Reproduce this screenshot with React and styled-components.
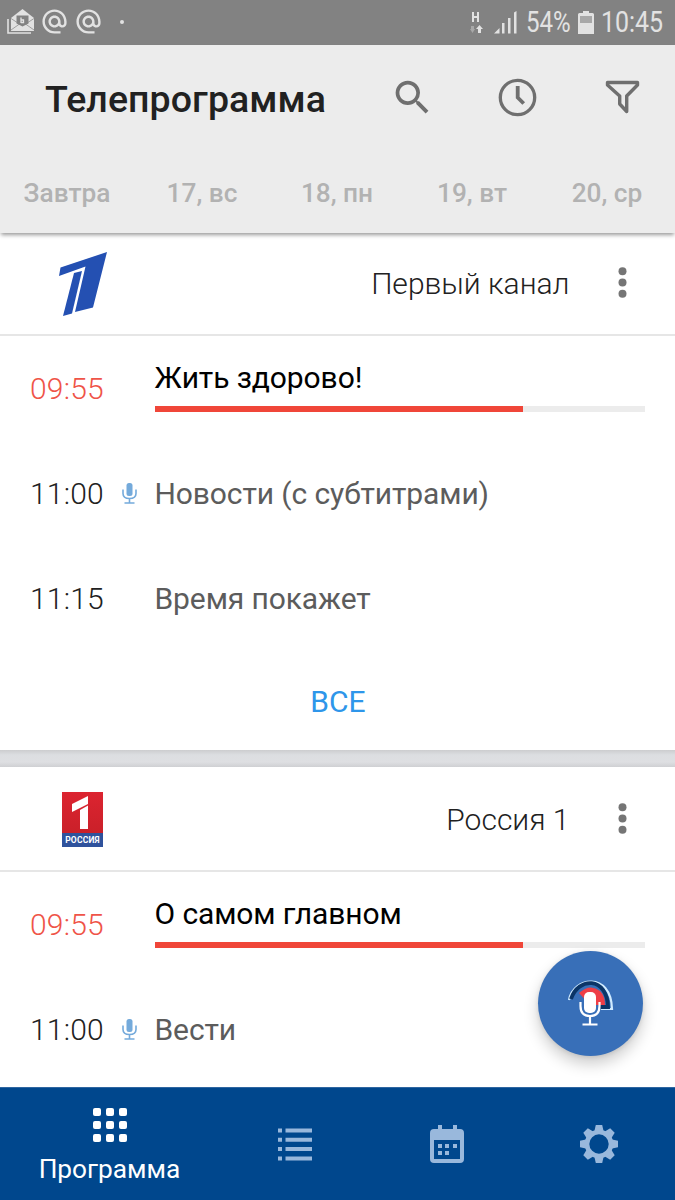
import React from "react"
import styled, { createGlobalStyle } from "styled-components"
import { MdAlternateEmail, MdSearch } from "react-icons/md"

const GlobalStyle = createGlobalStyle`
  * {
    box-sizing: border-box;
  }
  body {
    margin: 0;
    background: #fff;
    font-family: Roboto, "Noto Sans", sans-serif;
  }
`

const Screen = styled.div`
  position: relative;
  display: flex;
  flex-direction: column;
  width: 675px;
  height: 1200px;
  overflow: hidden;
  background: #fff;
`

const StatusBar = styled.div`
  display: flex;
  flex: none;
  align-items: center;
  justify-content: space-between;
  height: 45px;
  padding: 0 11px 0 7px;
  background: #828282;
  color: #e2e2e2;
`
const StatusGroup = styled.div`
  display: flex;
  align-items: center;
  height: 45px;
`
const MailIcon = styled.svg`
  margin: 0 5px 2px 0;
`
const AtIcon = styled(MdAlternateEmail)`
  width: 29px;
  height: 29px;
  margin: 0 5px 2px 0;
`
const Dot = styled.span`
  width: 4px;
  height: 4px;
  margin: 0 0 1px 12px;
  border-radius: 50%;
  background: #e2e2e2;
`
const StatusText = styled.span`
  width: ${(props) => props.$width}px;
  font-size: 29px;
  line-height: 45px;
  white-space: nowrap;

  span {
    display: inline-block;
    transform: scaleX(${(props) => props.$scale});
    transform-origin: left center;
  }
`
const Battery = styled.svg`
  margin: 0 7px 1px 8px;
`

const AppBar = styled.header`
  position: relative;
  z-index: 1;
  flex: none;
  height: 188px;
  background: #ececec;
  box-shadow: 0 3px 4px -1px rgba(0, 0, 0, 0.4);
`
const TitleRow = styled.div`
  display: flex;
  align-items: center;
  height: 105px;
  padding: 0 30px 0 45px;
  color: #6f6f6f;
`
const Title = styled.h1`
  flex: 1;
  margin: 3px 0 0;
  color: #212121;
  font-size: 37.5px;
  font-weight: 500;
  letter-spacing: 0.08px;
  line-height: 44px;
  white-space: nowrap;
`
const IconButton = styled.button`
  display: flex;
  align-items: center;
  justify-content: center;
  width: 45px;
  height: 45px;
  margin-left: ${(props) => props.$gap || 0}px;
  padding: 0;
  border: none;
  background: none;
  color: inherit;
`
const Days = styled.nav`
  display: flex;
  height: 83px;
`
const Day = styled.a`
  flex: 1;
  padding-right: 1px;
  color: #b2b2b2;
  font-size: 26.25px;
  font-weight: 500;
  line-height: 87px;
  text-align: center;
  white-space: nowrap;
`

const Channels = styled.main`
  flex: 1;
  min-height: 0;
  margin-top: -2px;
  overflow: hidden;
`
const Card = styled.section`
  background: #fff;
`
const Divider = styled.div`
  height: 17px;
  background: linear-gradient(#cccdcf, #dcdee1 5px, #dedfe2 12px, #cfd0d3);
`
const ChannelHeader = styled.div`
  display: flex;
  align-items: center;
  height: 105px;
  padding-right: 30px;
  border-bottom: 2px solid #e6e6e6;
`
const LogoBox = styled.div`
  display: flex;
  align-items: center;
  justify-content: center;
  width: 165px;
  padding-top: 2px;
`
const ChannelName = styled.h2`
  flex: 1;
  margin: 2px 30.5px 0 0;
  color: #212121;
  font-size: 30px;
  font-weight: 300;
  text-align: right;
`
const RussiaLogo = styled.div`
  display: flex;
  flex-direction: column;
  align-items: center;
  width: 41px;
  height: 55px;
  background: linear-gradient(#dc2430, #c41f27);
`
const RussiaName = styled.span`
  width: 41px;
  height: 14px;
  background: #2f529c;
  color: #fff;
  font-size: 8.5px;
  font-weight: 700;
  letter-spacing: 0.2px;
  line-height: 14px;
  text-align: center;
`
const Show = styled.div`
  display: flex;
  align-items: center;
  height: 105px;
  padding: 0 30px;
`
const Time = styled.span`
  width: 88px;
  color: ${(props) => (props.$live ? "#ef5448" : "#212121")};
  font-size: 30px;
  font-weight: 300;
  letter-spacing: 0.2px;
`
const MicSlot = styled.span`
  display: flex;
  width: 36.5px;
  padding-left: 4px;
`
const ShowBody = styled.div`
  flex: 1;
`
const ShowName = styled.div`
  color: ${(props) => (props.$live ? "#000" : "#5c5c5c")};
  font-size: 30px;
  letter-spacing: -0.1px;
  line-height: 36px;
`
const Progress = styled.div`
  height: 6px;
  margin: 10px 0 6px;
  background: #ececec;
`
const ProgressFill = styled.div`
  height: 6px;
  background: #f04639;
`
const AllButton = styled.button`
  display: block;
  width: 100%;
  height: 99px;
  padding: 1px 0 0 1px;
  border: none;
  background: none;
  color: #2e96ea;
  font: 400 30px Roboto, "Noto Sans", sans-serif;
`

const Fab = styled.button`
  position: absolute;
  top: 951px;
  left: 538px;
  width: 105px;
  height: 105px;
  padding: 0;
  border: none;
  border-radius: 50%;
  background: #386fb8;
  box-shadow: 0 8px 15px rgba(0, 0, 0, 0.2), 0 1px 4px rgba(0, 0, 0, 0.1);
`

const BottomNav = styled.nav`
  display: flex;
  flex: none;
  height: 113px;
  border-top: 1px solid #2f66a0;
  background: #00478d;
`
const NavItem = styled.a`
  display: flex;
  flex-direction: column;
  align-items: center;
  justify-content: ${(props) => (props.$active ? "flex-start" : "center")};
  width: ${(props) => (props.$active ? 219 : 152)}px;
  padding-top: ${(props) => (props.$active ? 20 : 0)}px;
  color: ${(props) => (props.$active ? "#fff" : "#99b8dc")};
`
const NavLabel = styled.span`
  margin-top: 11px;
  font-size: 26.25px;
  line-height: 32px;
`

const days = ["Завтра", "17, вс", "18, пн", "19, вт", "20, ср"]

const FirstLogo = () => (
  <svg width="50" height="64" viewBox="0 0 50 64" fill="#2450b2">
    <path d="M2.500 15.500 49 0 35 55.500 17 60 27.500 14.500 1 24z" />
    <path d="M16 21 24 19 14 61.500 5 64z" />
  </svg>
)

const RossiyaLogo = () => (
  <RussiaLogo>
    <svg width="41" height="41" viewBox="0 0 41 41" fill="#fff">
      <path d="M10 12 26 4v8L10 20z" />
      <path d="M18 18 26 13.500V37h-8z" />
    </svg>
    <RussiaName>РОССИЯ</RussiaName>
  </RussiaLogo>
)

const channels = [
  {
    name: "Первый канал",
    logo: <FirstLogo />,
    shows: [
      { time: "09:55", name: "Жить здорово!", progress: 75.2 },
      { time: "11:00", name: "Новости (с субтитрами)", mic: true },
      { time: "11:15", name: "Время покажет" },
    ],
  },
  {
    name: "Россия 1",
    logo: <RossiyaLogo />,
    shows: [
      { time: "09:55", name: "О самом главном", progress: 75.2 },
      { time: "11:00", name: "Вести", mic: true },
    ],
  },
]

const Mic = () => (
  <svg width="15" height="21" viewBox="0 0 15 21" fill="none" stroke="#74aadb">
    <rect x="4.5" y="0" width="6" height="13" rx="2.5" fill="#74aadb" stroke="none" />
    <path d="M1 6.500v4q0 5 6.500 5t6.500-5v-4M7.500 15.500v4M2.500 20h10" strokeWidth="1.6" />
  </svg>
)

const More = () => (
  <svg width="9" height="31" viewBox="0 0 9 31" fill="#757575">
    <circle cx="4.5" cy="4.3" r="4" />
    <circle cx="4.5" cy="15.5" r="4" />
    <circle cx="4.5" cy="26.7" r="4" />
  </svg>
)

const Channel = ({ channel }) => (
  <Card>
    <ChannelHeader>
      <LogoBox>{channel.logo}</LogoBox>
      <ChannelName>{channel.name}</ChannelName>
      <IconButton>
        <More />
      </IconButton>
    </ChannelHeader>
    {channel.shows.map((show) => {
      const live = show.progress !== undefined
      return (
        <Show key={show.time}>
          <Time $live={live}>{show.time}</Time>
          <MicSlot>{show.mic && <Mic />}</MicSlot>
          <ShowBody>
            <ShowName $live={live}>{show.name}</ShowName>
            {live && (
              <Progress>
                <ProgressFill style={{ width: `${show.progress}%` }} />
              </Progress>
            )}
          </ShowBody>
        </Show>
      )
    })}
    {channel.shows.length > 2 && <AllButton>ВСЕ</AllButton>}
  </Card>
)

const Status = () => (
  <StatusBar>
    <StatusGroup>
      <MailIcon width="28" height="26" viewBox="0 0 28 26" fill="#e2e2e2">
        <path d="M4 9 15.500 0 27 9v13H4z" />
        <path d="M9.500 6.500h12v8l-6 3-6-3z" fill="#828282" />
        <path d="M4 9.500 12.500 15 4 21M27 9.500 18.500 15 27 21" fill="none" stroke="#828282" strokeWidth="0.7" />
        <path d="M14 8.500v5.500M14 11h2.500v2.500H14" fill="none" stroke="#e2e2e2" strokeWidth="1.3" />
        <path d="M1 10v14h23" fill="none" stroke="#e2e2e2" strokeWidth="1.6" />
      </MailIcon>
      <AtIcon />
      <AtIcon />
      <Dot />
    </StatusGroup>
    <StatusGroup>
      <svg width="56" height="24" viewBox="0 0 56 24" fill="#e2e2e2">
        <path d="M2 1h2v4h3V1h2v10H7V7H4v4H2z" />
        <path d="M9.500 14 13 18h-2v4H8v-4H6z" />
        <path d="M1 15h3v3h1l-2.500 4L0 18h1z" opacity="0.4" />
        <path d="M24 22.500h5.500V17zM32 12h2.500v10.500H32zM38 7h2.500v15.500H38zM44 1.500 46.500 0v22.500H44z" />
      </svg>
      <StatusText $width={44} $scale={0.83}>
        <span>54%</span>
      </StatusText>
      <Battery width="16" height="23" viewBox="0 0 16 23" fill="#e2e2e2">
        <path d="M5 0h6v2h3.500q1.500 0 1.500 1.500V23H0V3.500Q0 2 1.500 2H5z" />
        <path d="M2 5h12v7H2z" fill="#a8a8a8" />
      </Battery>
      <StatusText $width={63} $scale={0.86}>
        <span>10:45</span>
      </StatusText>
    </StatusGroup>
  </StatusBar>
)

const App = () => {
  return (
    <>
      <GlobalStyle />
      <Screen>
        <Status />
        <AppBar>
          <TitleRow>
            <Title>Телепрограмма</Title>
            <IconButton>
              <MdSearch size={45} />
            </IconButton>
            <IconButton $gap={60}>
              <svg width="39" height="39" viewBox="0 0 39 39" fill="none" stroke="currentColor">
                <circle cx="19.5" cy="19.5" r="17.2" strokeWidth="3.3" />
                <path d="M19.700 8v11.500l6 6" strokeWidth="3.8" />
              </svg>
            </IconButton>
            <IconButton $gap={60}>
              <svg width="35" height="35" viewBox="0 0 35 35" fill="none" stroke="currentColor">
                <path
                  d="M2.500 2.500h30v2.500L21.700 16V31.500L14.700 24V16L2.500 5z"
                  strokeWidth="3.4"
                  strokeLinejoin="round"
                />
              </svg>
            </IconButton>
          </TitleRow>
          <Days>
            {days.map((day) => (
              <Day key={day}>{day}</Day>
            ))}
          </Days>
        </AppBar>
        <Channels>
          <Channel channel={channels[0]} />
          <Divider />
          <Channel channel={channels[1]} />
        </Channels>
        <BottomNav>
          <NavItem $active>
            <svg width="34" height="34" viewBox="0 0 34 34" fill="#fff">
              {[0, 13, 26].map((y) =>
                [0, 13, 26].map((x) => (
                  <rect key={`${x}-${y}`} x={x} y={y} width="8" height="8" rx="2" />
                ))
              )}
            </svg>
            <NavLabel>Программа</NavLabel>
          </NavItem>
          <NavItem>
            <svg width="34" height="33" viewBox="0 0 34 33" fill="currentColor">
              {[0.5, 9.8, 19.1, 28.4].map((y) => (
                <path key={y} d={`M0 ${y}h4v4H0zM7.500 ${y}H34v4H7.500z`} />
              ))}
            </svg>
          </NavItem>
          <NavItem>
            <svg width="34" height="38" viewBox="0 0 34 38" fill="currentColor">
              <path d="M8 0h4v4h11V0h4v4h3q4 0 4 4v26q0 4-4 4H4q-4 0-4-4V8q0-4 4-4h4z" />
              <path d="M4 15h26v19H4z" fill="#00478d" />
              <path d="M8 19h4v4H8zM15 19h4v4h-4zM23 19h4v4h-4zM8 26h4v4H8zM15 26h4v4h-4z" />
            </svg>
          </NavItem>
          <NavItem>
            <svg width="38" height="38" viewBox="-19 -19 38 38" fill="currentColor">
              <circle r="12" fill="none" stroke="currentColor" strokeWidth="4.6" />
              {[0, 45, 90, 135, 180, 225, 270, 315].map((angle) => (
                <path key={angle} d="M-3.200-19h6.400l1.600 7h-9.600z" transform={`rotate(${angle})`} />
              ))}
            </svg>
          </NavItem>
        </BottomNav>
        <Fab>
          <svg width="105" height="105" viewBox="0 0 105 105" fill="none">
            <path d="M31 49C35 26 73 20 74 58H63" stroke="#cfeaff" strokeWidth="2.2" />
            <path d="M33 48C40 26 69 25 70 56H62" stroke="#0b3567" strokeWidth="3.8" />
            <path d="M41 42Q52 32 62 40 67 45 67 54H52z" fill="#ee3e46" />
            <rect x="46" y="41" width="12" height="21" rx="5" fill="#fff" />
            <path d="M42.500 51v4q0 10 9.500 10t9.500-10v-4M52 65v8M44.500 73.500h15" stroke="#fff" strokeWidth="2.2" />
          </svg>
        </Fab>
      </Screen>
    </>
  )
}

export default App
